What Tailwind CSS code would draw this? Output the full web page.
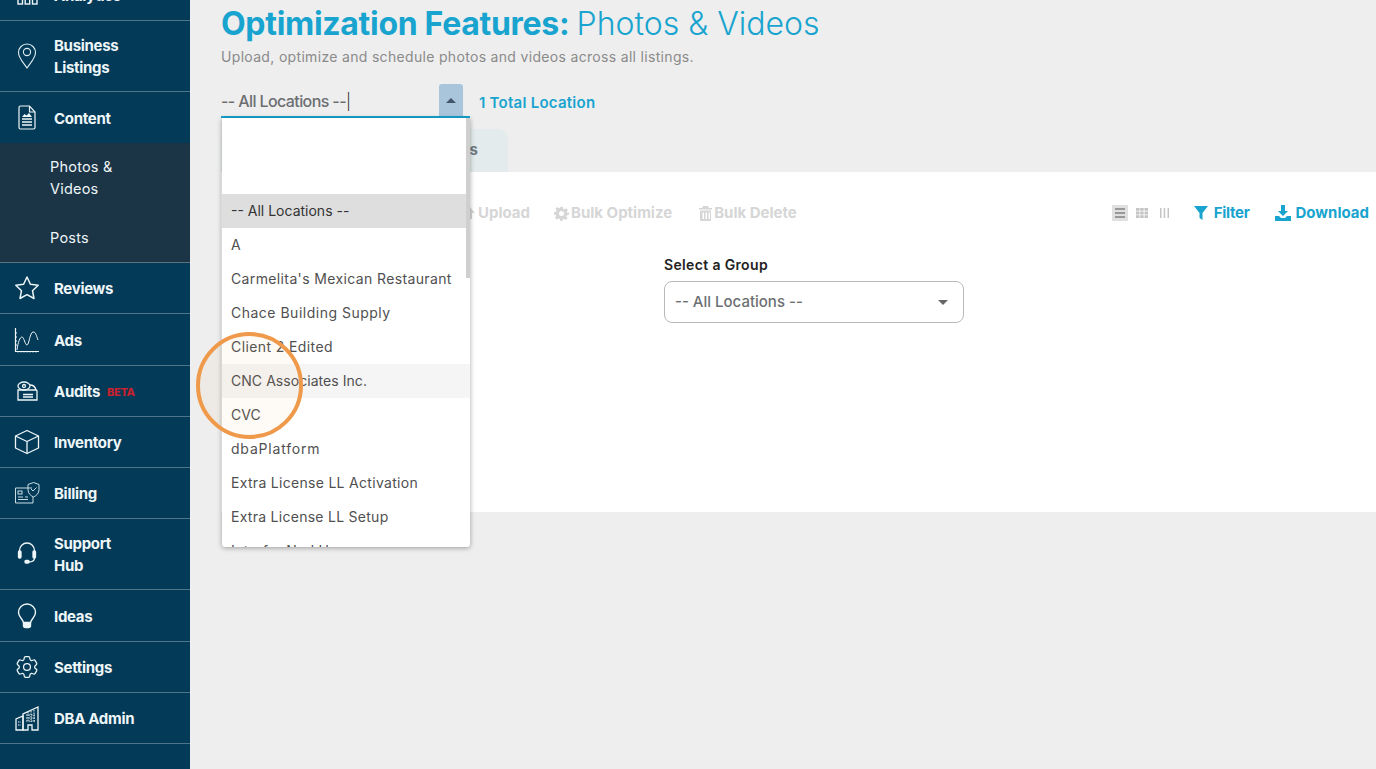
<!DOCTYPE html>
<html lang="en">
  <head>
    <meta charset="UTF-8" />
    <title>Photos &amp; Videos</title>
    <script src="https://cdn.jsdelivr.net/npm/@tailwindcss/browser@4"></script>
  </head>
  <body class="bg-[#eeeeee] font-['Inter',sans-serif] overflow-hidden">
    <div class="relative flex h-[769px] w-[1376px] overflow-hidden">
      <!-- sidebar -->
      <nav class="w-[190px] shrink-0 bg-[#033a58] text-[#eef6f8] text-[15px] leading-[22px] font-bold tracking-[-0.3px] -mt-[30px] pb-10">
        <a class="relative flex h-[51px] items-center border-b border-white/30 pl-[54px] pt-[2px]">
          <svg class="absolute left-[17px] top-[11px] h-[24px] w-[21px]" viewBox="0 0 21 24" fill="none" stroke="#eef6f8" stroke-width="1.400"><rect x="1" y="12" width="4.500" height="11"/><rect x="8.200" y="6" width="4.500" height="17"/><rect x="15.500" y="10" width="4.500" height="13"/></svg>
          <span>Analytics</span>
        </a>
        <a class="relative flex h-[71px] items-center border-b border-white/30 pl-[54px] pt-[2px]">
          <svg class="absolute left-[17px] top-[22px] h-[26px] w-[20px]" viewBox="0 0 20 26" fill="none" stroke="#dfeef2" stroke-width="1.100"><path d="M10 25C6 19 1.500 15 1.500 9.500a8.500 8.500 0 0 1 17 0C18.500 15 14 19 10 25Z"/><circle cx="10" cy="9" r="3.600"/></svg>
          <span>Business<br />Listings</span>
        </a>
        <a class="relative flex h-[51px] items-center pl-[54px] pt-[2px]">
          <svg class="absolute left-[18px] top-[13px] h-[25px] w-[18px]" viewBox="0 0 18 25" fill="none" stroke="#eef6f8" stroke-width="1.200"><path d="M2.500 1h9l5.500 6v15.500a1.500 1.500 0 0 1-1.500 1.500h-13A1.500 1.500 0 0 1 1 22.500v-20A1.500 1.500 0 0 1 2.500 1Z"/><path d="M11.500 1v6H17"/><path d="M4 14h10M4 17h10M4 20h10" stroke-width="1.500"/><path d="M4 12l2.500-3 2 1.500L11 8l3 4z" fill="#eef6f8" stroke="none"/></svg>
          <span>Content</span>
        </a>
        <div class="border-b border-white/30 bg-[#1b3446] pt-[13px] pb-[13px] pl-[50px] font-normal tracking-[0.2px] text-[14.500px]">
          <div class="w-[90px]">Photos &amp; Videos</div>
          <div class="mt-[27px]">Posts</div>
        </div>
        <a class="relative flex h-[51px] items-center border-b border-white/30 pl-[54px] pt-[2px]">
          <svg class="absolute left-[14px] top-[12px] h-[25px] w-[26px]" viewBox="0 0 26 25" fill="none" stroke="#eef6f8" stroke-width="1.500"><path d="M13 2l3.400 7.300 7.800 1-5.700 5.400 1.500 7.800L13 19.700l-7 3.800 1.500-7.800L1.800 10.300l7.800-1Z" stroke-linejoin="round"/></svg>
          <span>Reviews</span>
        </a>
        <a class="relative flex h-[52px] items-center border-b border-white/30 pl-[54px] pt-[2px]">
          <svg class="absolute left-[14px] top-[13px] h-[26px] w-[26px]" viewBox="0 0 26 26" fill="none" stroke="#eef6f8" stroke-width="1"><path d="M1.500 1v23.500H25" stroke-width="1.200"/><path d="M3 23c1-8 3-13 5-13s3 8 5 8 3-13 6-13 3 3 5 8"/><path d="M4 24v1.500M7 24v1.500M10 24v1.500M13 24v1.500M16 24v1.500M19 24v1.500M22 24v1.500M1.500 6H3M1.500 10H3M1.500 14H3M1.500 18H3"/></svg>
          <span>Ads</span>
        </a>
        <a class="relative flex h-[51px] items-center border-b border-white/30 pl-[54px] pt-[2px]">
          <svg class="absolute left-[16px] top-[14px] h-[22px] w-[22px]" viewBox="0 0 22 22" fill="none" stroke="#eef6f8" stroke-width="1.300"><path d="M2 10h18a1 1 0 0 1 1 1v9H2Z"/><path d="M7 14.500h10M7 17h10"/><ellipse cx="8" cy="6" rx="6" ry="4"/><circle cx="8" cy="6" r="1.500"/><path d="M14 5c3 0 5 1 6 5"/></svg>
          <span>Audits</span>
          <span class="ml-[7px] text-[11px] font-extrabold text-[#c8212f]">BETA</span>
        </a>
        <a class="relative flex h-[51px] items-center border-b border-white/30 pl-[54px] pt-[2px]">
          <svg class="absolute left-[14px] top-[12px] h-[26px] w-[26px]" viewBox="0 0 26 26" fill="none" stroke="#eef6f8" stroke-width="1.300" stroke-linejoin="round"><path d="M13 1.500 24.500 7v12L13 24.500 1.500 19V7Z"/><path d="M1.500 7 13 12.500 24.500 7M13 12.500v12"/></svg>
          <span>Inventory</span>
        </a>
        <a class="relative flex h-[51px] items-center border-b border-white/30 pl-[54px] pt-[2px]">
          <svg class="absolute left-[14px] top-[13px] h-[24px] w-[26px]" viewBox="0 0 26 24" fill="none" stroke="#dfeef2" stroke-width="0.900"><path d="M18 7H1.500v15H19v-6"/><rect x="4" y="10" width="4" height="3"/><path d="M4 16h5M4 18.500h10M11 16h3"/><path d="M19.500 1.500 25 3.500v5c0 4-2.500 6-5.500 7.500-3-1.500-5.500-3.500-5.500-7.500v-5Z"/><path d="m17 8 2 2 3.500-3.500"/></svg>
          <span>Billing</span>
        </a>
        <a class="relative flex h-[71px] items-center border-b border-white/30 pl-[54px] pt-[2px]">
          <svg class="absolute left-[17px] top-[22px] h-[24px] w-[20px]" viewBox="0 0 20 24" fill="none" stroke="#eef6f8" stroke-width="1.300"><path d="M2.500 11V9.500a7.500 7.500 0 0 1 15 0V11"/><rect x="1.500" y="10" width="2.500" height="7" rx="1" fill="#eef6f8"/><rect x="16" y="10" width="2.500" height="7" rx="1" fill="#eef6f8"/><path d="M17.500 17c0 3-2 4-6 4"/><rect x="8" y="19.500" width="4" height="2.500" rx="1" fill="#eef6f8"/></svg>
          <span>Support<br />Hub</span>
        </a>
        <a class="relative flex h-[52px] items-center border-b border-white/30 pl-[54px] pt-[2px]">
          <svg class="absolute left-[17px] top-[13px] h-[26px] w-[20px]" viewBox="0 0 20 26" fill="none" stroke="#eef6f8" stroke-width="1.400"><path d="M6.500 19.500C5.500 15.500 1.500 14 1.500 9.500a8.500 8.500 0 0 1 17 0c0 4.500-4 6-5 10Z"/><path d="M6.500 20h7v2.500a2 2 0 0 1-2 2h-3a2 2 0 0 1-2-2Z" fill="#eef6f8"/></svg>
          <span>Ideas</span>
        </a>
        <a class="relative flex h-[51px] items-center border-b border-white/30 pl-[54px] pt-[2px]">
          <svg class="absolute left-[15px] top-[13px] h-[24px] w-[24px]" viewBox="1.500 1.500 21 21" fill="none" stroke="#eef6f8" stroke-width="1.100" stroke-linejoin="round"><path d="M9.594 3.940c.09-.542.56-.94 1.110-.94h2.593c.55 0 1.020.398 1.110.94l.213 1.281c.063.374.313.686.645.870.074.040.147.083.22.127.325.196.72.257 1.075.124l1.217-.456a1.125 1.125 0 0 1 1.370.490l1.296 2.247a1.125 1.125 0 0 1-.26 1.431l-1.003.827c-.293.241-.438.613-.43.992a7.723 7.723 0 0 1 0 .255c-.008.378.137.75.43.991l1.004.827c.424.35.534.955.26 1.430l-1.298 2.247a1.125 1.125 0 0 1-1.369.491l-1.217-.456c-.355-.133-.75-.072-1.076.124a6.470 6.470 0 0 1-.22.128c-.331.183-.581.495-.644.869l-.213 1.281c-.09.543-.56.94-1.110.94h-2.594c-.55 0-1.019-.398-1.110-.94l-.213-1.281c-.062-.374-.312-.686-.644-.87a6.520 6.520 0 0 1-.22-.127c-.325-.196-.72-.257-1.076-.124l-1.217.456a1.125 1.125 0 0 1-1.369-.49l-1.297-2.247a1.125 1.125 0 0 1 .26-1.431l1.004-.827c.292-.24.437-.613.43-.991a6.932 6.932 0 0 1 0-.255c.007-.38-.138-.751-.43-.992l-1.004-.827a1.125 1.125 0 0 1-.26-1.430l1.297-2.247a1.125 1.125 0 0 1 1.370-.491l1.216.456c.356.133.751.072 1.076-.124.072-.044.146-.086.22-.128.332-.183.582-.495.644-.869l.214-1.280Z"/><circle cx="12" cy="12" r="3"/></svg>
          <span>Settings</span>
        </a>
        <a class="relative flex h-[51px] items-center border-b border-white/30 pl-[54px] pt-[2px]">
          <svg class="absolute left-[15px] top-[13px] h-[25px] w-[24px]" viewBox="0 0 24 25" fill="none" stroke="#eef6f8" stroke-width="1.300"><path d="M1 24V13l7-3v14Z"/><path d="M8 24V8L23 1v23h-6v-5h-4v5Z"/><path d="M11 9h9M11 12h9M11 15h9M13 6v10M16 5v11M19 4v12M3 16h3M3 19h3" stroke-width="1" stroke-dasharray="1.500 1"/></svg>
          <span>DBA Admin</span>
        </a>
      </nav>

      <!-- main -->
      <main class="min-w-0 flex-1">
        <div class="pl-[31px]">
          <h1 class="pt-[5px] text-[32px] leading-[38px] font-bold tracking-[-0.3px] text-[#18a4cf]">Optimization Features: <span class="font-light tracking-normal">Photos &amp; Videos</span></h1>
          <p class="mt-[4px] text-[14px] leading-[20px] tracking-[0.32px] text-[#8a8a8a]">Upload, optimize and schedule photos and videos across all listings.</p>
          <div class="mt-[17px] flex items-center">
            <div class="flex h-[34px] w-[249px] items-center justify-between border-b-2 border-[#18a4cf]">
              <span class="pt-[2px] text-[16px] font-medium tracking-[-0.6px] text-[#6c6f72]">-- All Locations --<span class="font-light text-[#333]">|</span></span>
              <span class="mr-[7px] flex h-[32px] w-[24px] items-center justify-center rounded-t-[3px] bg-[#a9c5dc]">
                <span class="h-0 w-0 border-x-[5px] border-b-[5px] border-x-transparent border-b-[#44566a]"></span>
              </span>
            </div>
            <span class="ml-[9px] pt-[4px] text-[15px] font-semibold tracking-[0.25px] text-[#18a4cf]">1 Total Location</span>
          </div>
          <div class="mt-[11px] flex h-[43px] w-[287px] items-center justify-end rounded-t-[10px] bg-[#e3ebec] pr-[30px] text-[15px] font-bold text-[#6f7a80]">s</div>
          <section class="h-[340px] bg-white"></section>
        </div>
      </main>

      <!-- toolbar -->
      <div class="absolute left-[463px] top-[172px] right-0 h-[340px]">
        <div class="flex h-[82px] items-center text-[15px] font-bold text-[#d6d6d6]">
          <span class="ml-[1px] flex items-center gap-[2px]"><svg class="h-[14px] w-[12px]" viewBox="0 0 12 14" fill="#d6d6d6"><path d="M6 1 1 7h3v6h4V7h3Z"/></svg>Upload</span>
          <span class="ml-[24px] flex items-center gap-[2px]"><svg class="h-[15px] w-[15px]" viewBox="0 0 24 24" fill="#d6d6d6"><path fill-rule="evenodd" d="M10 1h4l.7 3.300 2 .9 2.800-1.800 2.800 2.800-1.800 2.800.9 2L24 10v4l-3.300.7-.9 2 1.800 2.800-2.800 2.800-2.800-1.800-2 .9L14 24h-4l-.7-3.300-2-.9-2.800 1.800-2.800-2.800 1.800-2.800-.9-2L0 14v-4l3.300-.7.9-2-1.800-2.800 2.800-2.800 2.800 1.800 2-.9ZM12 8a4 4 0 1 0 0 8 4 4 0 0 0 0-8Z"/></svg>Bulk Optimize</span>
          <span class="ml-[27px] flex items-center gap-[2px]"><svg class="h-[15px] w-[13px]" viewBox="0 0 13 15" fill="#d6d6d6"><path fill-rule="evenodd" d="M4 0h5l1 2h3v1.500H0V2h3ZM1 4.500h11V15H1Zm2.500 2v6.500H5V6.500Zm3 0v6.500H8V6.500Zm3 0v6.500H11V6.500Z"/></svg>Bulk Delete</span>
          <span class="ml-auto flex h-[16px] w-[16px] items-center justify-center bg-[#e0e0e0]"><svg class="h-[10px] w-[10px]" viewBox="0 0 10 10" fill="#999"><path d="M0 0h10v2H0ZM0 4h10v2H0ZM0 8h10v2H0Z"/></svg></span>
          <svg class="ml-[8px] h-[10px] w-[12px]" viewBox="0 0 12 10" fill="#c4c4c4"><path d="M0 0h3.500v2.800H0ZM4.200 0h3.500v2.800H4.200ZM8.500 0H12v2.800H8.500ZM0 3.600h3.500v2.800H0ZM4.200 3.600h3.500v2.800H4.200ZM8.500 3.600H12v2.800H8.500ZM0 7.200h3.500V10H0ZM4.200 7.200h3.500V10H4.200ZM8.500 7.200H12V10H8.500Z"/></svg>
          <svg class="ml-[12px] h-[10px] w-[9px]" viewBox="0 0 9 10" fill="#c4c4c4"><path d="M0 0h1.500v10H0ZM3.700 0h1.500v10H3.700ZM7.500 0H9v10H7.500Z"/></svg>
          <span class="ml-[25px] flex items-center gap-[6px] tracking-[-0.3px] text-[#18a4cf]"><svg class="h-[14px] w-[14px]" viewBox="0 0 14 14" fill="#18a4cf"><path d="M0 0h14L8.500 7v7l-3-2V7Z"/></svg>Filter</span>
          <span class="ml-[25px] mr-[7px] flex items-center gap-[5px] text-[#18a4cf]"><svg class="h-[16px] w-[16px]" viewBox="0 0 16 16" fill="#18a4cf"><path d="M6 0h4v6h3L8 11 3 6h3ZM0 11h4l2 2h4l2-2h4v5H0Z"/></svg>Download</span>
        </div>
        <div class="-mt-[2px] ml-[201px] w-[300px]">
          <label class="text-[14px] font-semibold tracking-[0.35px] text-[#222]">Select a Group</label>
          <div class="mt-[5px] flex h-[42px] items-center justify-between rounded-[8px] border border-[#b9b9b9] pl-[10px] pr-[15px] text-[15px] font-medium text-[#6c6f72]">
            -- All Locations --
            <span class="h-0 w-0 border-x-[5px] border-t-[5px] border-x-transparent border-t-[#666]"></span>
          </div>
        </div>
      </div>

      <!-- open location dropdown -->
      <div class="absolute left-[222px] top-[118px] h-[429px] w-[248px] overflow-hidden rounded-b-[3px] bg-white text-[14px] text-[#505050] shadow-[0_1px_5px_rgba(0,0,0,0.35)]">
        <div class="absolute right-0 top-0 h-[160px] w-[4px] bg-[#cfcfcf]"></div>
        <div class="h-[76px]"></div>
        <div class="flex h-[34px] items-center bg-[#dedede] pb-[2px] pl-[9px] text-[#333]">-- All Locations --</div>
        <div class="flex h-[34px] items-center pb-[2px] pl-[9px]">A</div>
        <div class="flex h-[34px] items-center pb-[2px] pl-[9px] tracking-[0.37px]">Carmelita's Mexican Restaurant</div>
        <div class="flex h-[34px] items-center pb-[2px] pl-[9px] tracking-[0.5px]">Chace Building Supply</div>
        <div class="flex h-[34px] items-center pb-[2px] pl-[9px] tracking-[0.4px]">Client 2 Edited</div>
        <div class="flex h-[34px] items-center bg-[#f5f5f5] pb-[2px] pl-[9px] tracking-[0.05px]">CNC Associates Inc.</div>
        <div class="flex h-[34px] items-center pb-[2px] pl-[9px]">CVC</div>
        <div class="flex h-[34px] items-center pb-[2px] pl-[9px] tracking-[0.8px]">dbaPlatform</div>
        <div class="flex h-[34px] items-center pb-[2px] pl-[9px] tracking-[0.3px]">Extra License LL Activation</div>
        <div class="flex h-[34px] items-center pb-[2px] pl-[9px] tracking-[0.27px]">Extra License LL Setup</div>
        <div class="flex h-[34px] items-center pb-[2px] pl-[9px] tracking-[0.3px]">Interfor Ned Ham</div>
      </div>

      <!-- annotation circle -->
      <div class="absolute left-[196px] top-[332px] h-[107px] w-[107px] rounded-full border-[4px] border-[#ef9a4b] bg-[#ef9a4b]/5"></div>
    </div>
  </body>
</html>
